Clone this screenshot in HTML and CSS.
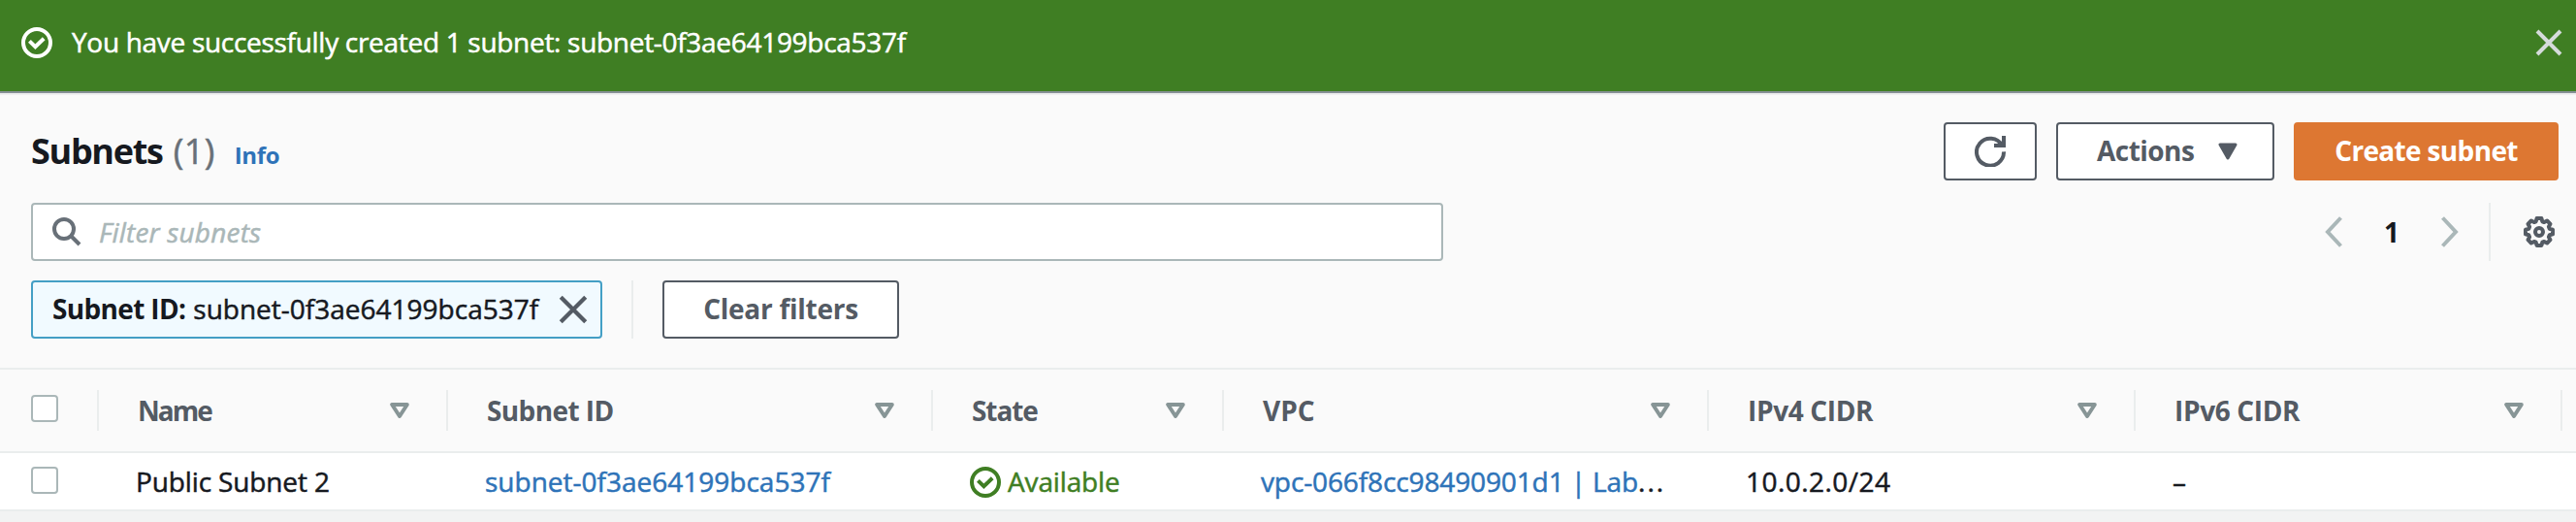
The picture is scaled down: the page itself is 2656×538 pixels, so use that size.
FILE: index.html
```
<!DOCTYPE html>
<html lang="en">
<head>
<meta charset="utf-8">
<title>Subnets</title>
<link rel="stylesheet" href="styles.css">
</head>
<body>
<svg class="defs" width="0" height="0">
  <symbol id="check-circle" viewBox="0 0 16 16"><g fill="none" stroke="currentColor" stroke-width="2"><circle cx="8" cy="8" r="7"/><path d="M4.2 7.2 L7.2 10.1 L11.6 5.9"/></g></symbol>
  <symbol id="close" viewBox="0 0 16 16"><path d="M2 2 L14 14 M14 2 L2 14" fill="none" stroke="currentColor" stroke-width="2"/></symbol>
  <symbol id="sort" viewBox="0 0 20 18"><path d="M2.2 3 H17.8 L10 15 Z" fill="none" stroke="currentColor" stroke-width="4" stroke-linejoin="round"/></symbol>
</svg>

<div class="flash">
  <svg class="icon flash-icon"><use href="#check-circle"/></svg>
  <span class="flash-text">You have successfully created 1 subnet: subnet-0f3ae64199bca537f</span>
  <svg class="icon flash-close"><use href="#close"/></svg>
</div>

<header class="title-row">
  <h1 class="title">Subnets</h1>
  <span class="counter">(1)</span>
  <a class="info">Info</a>
  <div class="actions">
    <button class="btn btn-refresh"><svg class="icon" viewBox="0 0 16 16"><path d="M14.1 4.9 A7 7 0 1 0 15 8.2" fill="none" stroke="currentColor" stroke-width="2"/><path d="M15 0 V5 H10" fill="none" stroke="currentColor" stroke-width="2"/></svg></button>
    <button class="btn btn-actions"><span>Actions</span><svg class="caret" viewBox="0 0 20 18"><path d="M2 2 H18 L10 16 Z" fill="currentColor" stroke="currentColor" stroke-width="3" stroke-linejoin="round"/></svg></button>
    <button class="btn btn-primary">Create subnet</button>
  </div>
</header>

<div class="filter-row">
  <div class="search">
    <svg class="search-icon" viewBox="0 0 30 30"><circle cx="12" cy="12" r="10" fill="none" stroke="currentColor" stroke-width="4"/><path d="M19 19 L28 28" stroke="currentColor" stroke-width="4"/></svg>
    <span class="placeholder">Filter subnets</span>
  </div>
  <div class="pagination">
    <svg class="chevron" viewBox="0 0 18 32"><path d="M16.5 1.5 L3 16 L16.5 30.5" fill="none" stroke="currentColor" stroke-width="4"/></svg>
    <span class="page">1</span>
    <svg class="chevron" viewBox="0 0 18 32"><path d="M1.5 1.5 L15 16 L1.5 30.5" fill="none" stroke="currentColor" stroke-width="4"/></svg>
  </div>
  <div class="settings">
    <svg class="icon" viewBox="0 0 32 32"><g fill="none" stroke="currentColor"><circle cx="16" cy="16" r="4" stroke-width="4"/><path stroke-width="4" stroke-linejoin="round" d="M13.6 2 H18.4 L19.3 5.3 L21.2 6.1 L24.2 4.5 L27.5 7.8 L25.9 10.8 L26.7 12.7 L30 13.6 V18.4 L26.7 19.3 L25.9 21.2 L27.5 24.2 L24.2 27.5 L21.2 25.9 L19.3 26.7 L18.4 30 H13.6 L12.7 26.7 L10.8 25.9 L7.8 27.5 L4.5 24.2 L6.1 21.2 L5.3 19.3 L2 18.4 V13.6 L5.3 12.7 L6.1 10.8 L4.5 7.8 L7.8 4.5 L10.8 6.1 L12.7 5.3 Z"/></g></svg>
  </div>
</div>

<div class="token-row">
  <div class="token">
    <b class="token-key">Subnet ID:</b>
    <span class="token-value">subnet-0f3ae64199bca537f</span>
    <svg class="token-close"><use href="#close"/></svg>
  </div>
  <div class="clear"><button class="btn btn-clear">Clear filters</button></div>
</div>

<div class="grid head">
  <div class="th"><span class="box"></span></div>
  <div class="th"><span class="h-name">Name</span><svg class="sort"><use href="#sort"/></svg></div>
  <div class="th"><span class="h-id">Subnet ID</span><svg class="sort"><use href="#sort"/></svg></div>
  <div class="th"><span class="h-state">State</span><svg class="sort"><use href="#sort"/></svg></div>
  <div class="th"><span class="h-vpc">VPC</span><svg class="sort"><use href="#sort"/></svg></div>
  <div class="th"><span class="h-cidr">IPv4 CIDR</span><svg class="sort"><use href="#sort"/></svg></div>
  <div class="th"><span class="h-cidr">IPv6 CIDR</span><svg class="sort"><use href="#sort"/></svg></div>
</div>
<div class="grid row">
  <div class="td"><span class="box"></span></div>
  <div class="td"><span class="v-name">Public Subnet 2</span></div>
  <div class="td"><a class="link v-id">subnet-0f3ae64199bca537f</a></div>
  <div class="td state"><svg class="icon"><use href="#check-circle"/></svg><span class="v-state">Available</span></div>
  <div class="td"><a class="link v-vpc">vpc-066f8cc98490901d1 | Lab</a><span class="dots">...</span></div>
  <div class="td"><span class="v-cidr">10.0.2.0/24</span></div>
  <div class="td"><span class="v-none">–</span></div>
</div>
</body>
</html>
```
FILE: styles.css
```
* { box-sizing: border-box; }
body {
  margin: 0;
  height: 538px;
  overflow: hidden;
  background: #f2f3f3;
  color: #16191f;
  font: 400 28px/40px "Open Sans", "Noto Sans", sans-serif;
  white-space: nowrap;
}
svg { display: block; flex: none; }
.defs { position: absolute; }
.icon { width: 32px; height: 32px; }

.flash {
  display: flex;
  align-items: center;
  height: 94px;
  padding: 0 12px 6px 22px;
  background: #3f7e23;
  color: #fff;
}
.flash-text { margin: -2px auto 0 20px; letter-spacing: -0.3px; }
.flash-text, .counter, .placeholder, .token-value, .row { -webkit-text-stroke: 0.5px currentColor; }
.flash-close { color: #d5dbdb; }

.title-row {
  display: flex;
  align-items: center;
  height: 103px;
  padding: 19px 18px 0 32px;
  border-top: 2px solid #879196;
  background: #fafafa;
  box-shadow: inset 0 2px #eeefef;
}
.title { margin: 0; font-size: 36px; font-weight: 700; letter-spacing: -1.3px; }
.counter { margin: 0 0 0 11px; font-size: 36px; color: #687078; letter-spacing: 0.4px; }
.info { margin: 8px 0 0 20px; font-size: 24px; font-weight: 700; color: #2e73b8; letter-spacing: -0.34px; }
.actions { display: flex; gap: 20px; margin-left: auto; }
.btn {
  display: flex;
  align-items: center;
  justify-content: center;
  height: 60px;
  padding: 0 0 2px;
  border: 2px solid #545b64;
  border-radius: 4px;
  background: #fff;
  color: #545b64;
  font: 700 28px/40px "Open Sans", "Noto Sans", sans-serif;
}
.btn-refresh { width: 96px; padding: 0; }
.btn-actions { width: 225px; justify-content: flex-start; padding-left: 40px; letter-spacing: -0.53px; }
.caret { width: 20px; height: 18px; margin: 2px 0 0 25px; }
.btn-primary { width: 273px; border-color: #dd7732; background: #dd7732; color: #fff; letter-spacing: -0.66px; }

.filter-row {
  display: flex;
  height: 80px;
  padding: 12px 22px 8px 32px;
  background: #fafafa;
}
.search {
  display: flex;
  align-items: center;
  width: 1456px;
  height: 60px;
  padding-left: 20px;
  border: 2px solid #aab7b8;
  border-radius: 4px;
  background: #fff;
}
.search-icon { width: 30px; height: 30px; color: #687078; }
.placeholder { margin: 0 0 0 18px; font-style: italic; color: #aab7b8; letter-spacing: 0.18px; }
.pagination { display: flex; align-items: center; margin-left: auto; color: #aab7b8; }
.chevron { width: 18px; height: 32px; }
.page { width: 102px; text-align: center; font-weight: 700; color: #16191f; margin-top: -1px; }
.settings {
  display: flex;
  align-items: center;
  height: 60px;
  margin-left: 31px;
  padding-left: 34px;
  border-left: 2px solid #eaeded;
  color: #545b64;
}

.token-row {
  display: flex;
  height: 102px;
  padding: 12px 32px 0;
  background: #fafafa;
}
.token {
  display: flex;
  align-items: center;
  width: 589px;
  height: 60px;
  padding: 0 0 2px 20px;
  border: 2px solid #449fc5;
  border-radius: 4px;
  background: #f1faff;
}
.token-key { letter-spacing: -0.66px; }
.token-value { margin-left: 8px; }
.token-close { width: 34px; height: 34px; margin: 2px 0 0 19px; color: #545b64; }
.clear { height: 60px; margin-left: 30px; padding-left: 30px; border-left: 2px solid #eaeded; }
.btn-clear { width: 244px; letter-spacing: -0.26px; }

.grid { display: grid; grid-template-columns: 102px 360px 500px 300px 500px 440px 440px; }
.head {
  height: 88px;
  padding-top: 21px;
  border-top: 2px solid #eaeded;
  border-bottom: 2px solid #eaeded;
  background: #fafafa;
  color: #545b64;
  font-weight: 700;
}
.th {
  display: flex;
  align-items: center;
  justify-content: space-between;
  height: 42px;
  padding: 0 38px 0 40px;
  border-right: 2px solid #eaeded;
}
.th > span { margin-top: -1px; }
.box {
  width: 28px;
  height: 28px;
  margin-left: 32px;
  border: 2px solid #aab7b8;
  border-radius: 4px;
  background: #fff;
}
.th:first-child, .td:first-child { padding: 0; }
.th > .box { margin-top: -4px; }
.sort { width: 20px; height: 18px; color: #879596; }
.row { height: 60px; border-bottom: 2px solid #eaeded; background: #fff; }
.td { display: flex; align-items: center; height: 58px; padding: 0 0 1px 38px; }
.td:first-child { padding-bottom: 2px; }
.td .icon { margin-top: 3px; }
.link { color: #2e73b8; }
.state { color: #3f7e23; }
.h-name { letter-spacing: -2px; }
.h-id { letter-spacing: -0.6px; }
.h-state { letter-spacing: -1.1px; }
.h-cidr { letter-spacing: -0.36px; }
.v-name { letter-spacing: -0.13px; }
.v-state { margin-left: 7px; letter-spacing: -0.14px; }
.v-vpc { letter-spacing: -0.12px; }
.dots { color: #16191f; letter-spacing: 2px; }
.v-cidr { letter-spacing: 0.46px; }
```
